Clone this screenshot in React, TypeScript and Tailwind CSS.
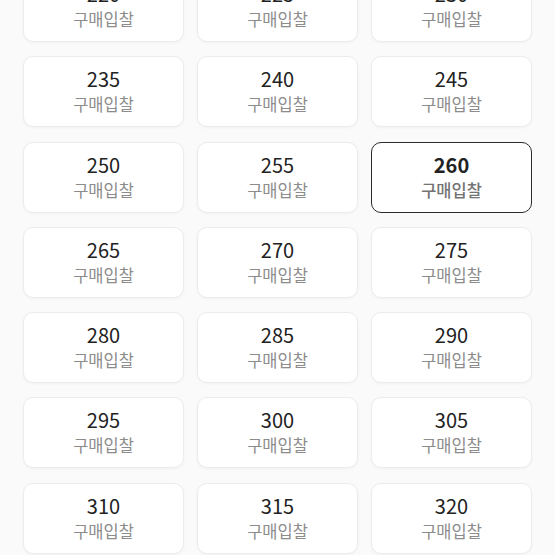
import React, { useState } from 'react';

const sizes = Array.from({ length: 21 }, (_, i) => 220 + i * 5);

const App: React.FC = () => {
  const [selected, setSelected] = useState<number>(260);

  return (
    <div
      className="h-[555px] overflow-hidden bg-[#fafafa]"
      style={{ fontFamily: '"Noto Sans CJK KR", "Noto Sans", sans-serif' }}
    >
      <div className="-mt-[29px] grid grid-cols-3 gap-x-[13px] gap-y-[14.25px] px-[23px]">
        {sizes.map(size => {
          const active = size === selected;
          return (
            <button
              key={size}
              onClick={() => setSelected(size)}
              className={`flex h-[71px] flex-col items-center justify-center rounded-[10px] bg-white ${
                active
                  ? 'border-[1.5px] border-[#2b2b2b]'
                  : 'border border-[#ececec] shadow-[0_1px_3px_rgba(0,0,0,0.04)]'
              }`}
            >
              <span
                className={`-mt-[2px] text-[20px] leading-[24px] text-[#222] ${active ? 'font-bold' : 'font-normal'}`}
              >
                {size}
              </span>
              <span
                className={`mt-[3px] text-[16.5px] leading-[20px] ${active ? 'text-[#737373] font-medium' : 'text-[#8c8c8c]'}`}
              >
                구매입찰
              </span>
            </button>
          );
        })}
      </div>
    </div>
  );
};

export default App;
